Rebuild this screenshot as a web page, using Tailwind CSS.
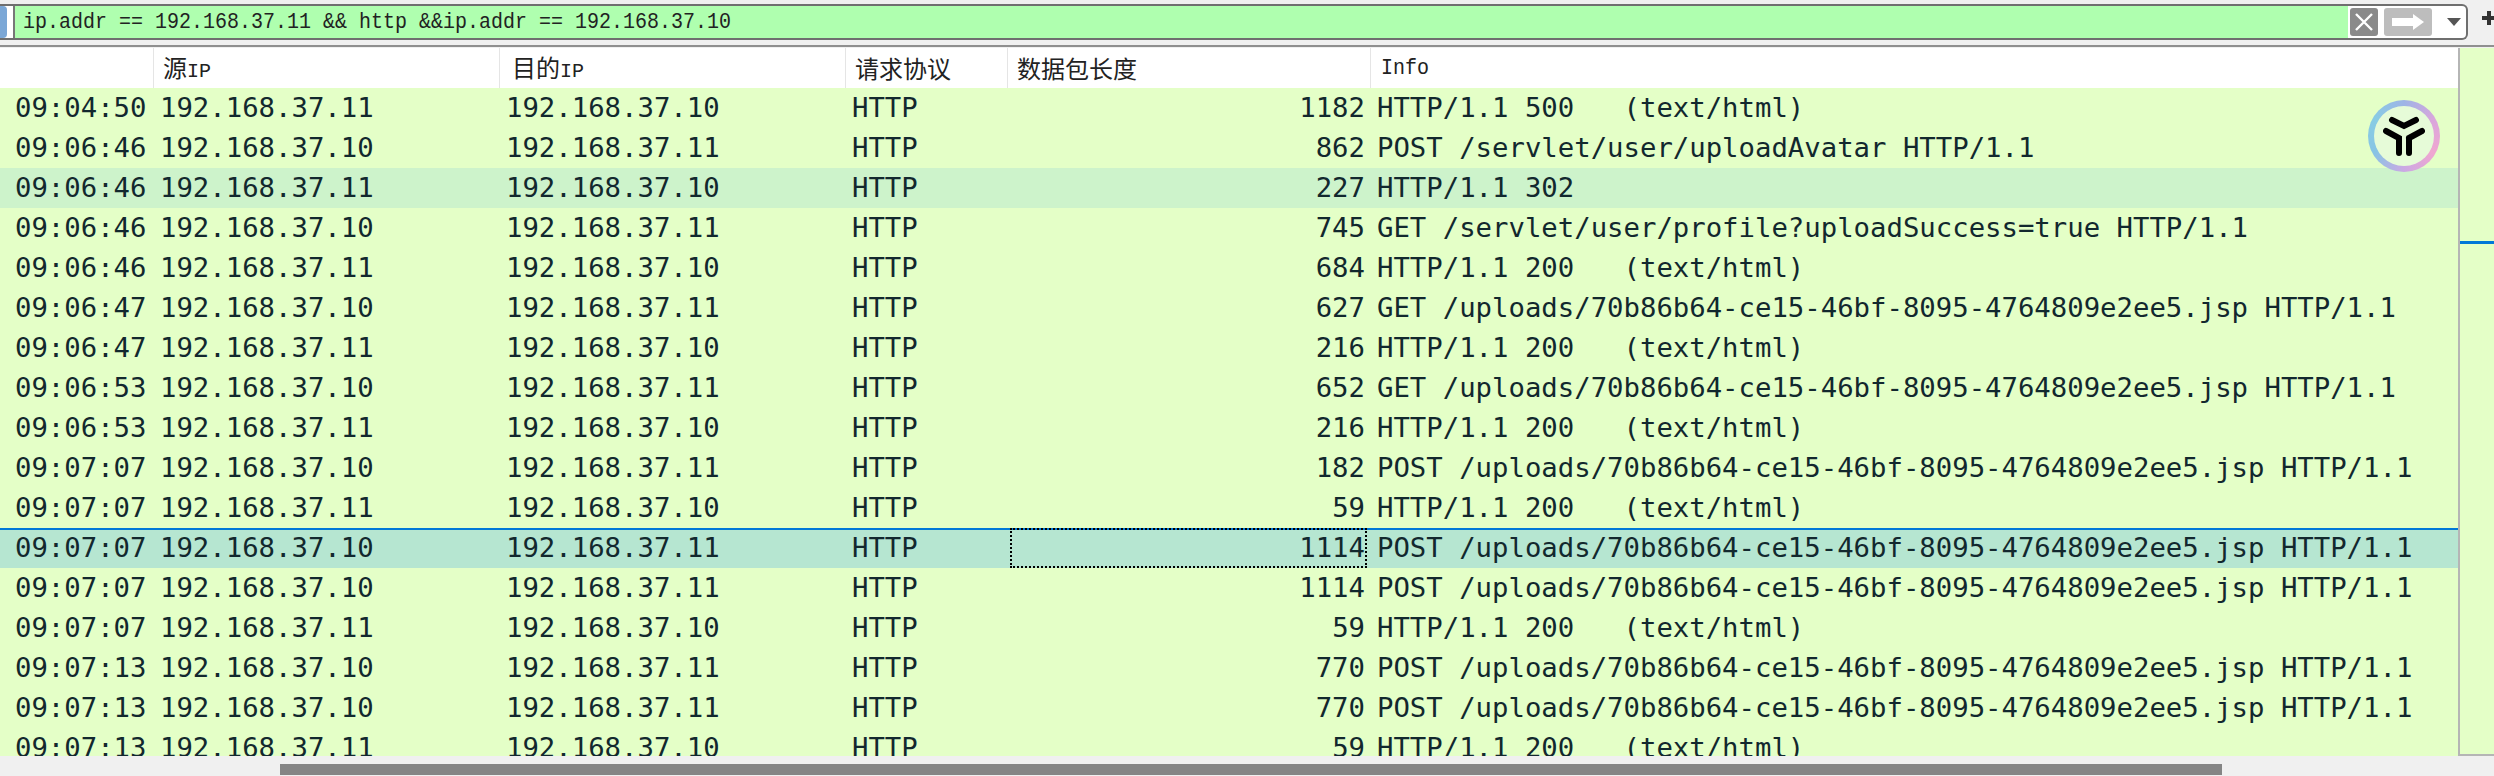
<!DOCTYPE html>
<html lang="en">
<head>
  <meta charset="UTF-8" />
  <title>Packet list</title>
  <script src="https://cdn.jsdelivr.net/npm/@tailwindcss/browser@4"></script>
</head>
<body class="relative h-[776px] w-[2494px] overflow-hidden bg-[#f0f0f0] font-['DejaVu_Sans_Mono',monospace] text-[#12282e]">

  <!-- filter bar -->
  <div class="h-[47px] border-b-2 border-[#8f8f8f] bg-[#f0f0f0] pt-1">
    <div class="relative h-[36px] w-[2468px] border-y-2 border-r-2 border-[#6f6f6f] rounded-r-md bg-white flex">
      <div class="w-[7px] rounded-r-sm bg-[#7ba7d6]"></div>
      <div class="w-[8px] border-r-2 border-[#777] bg-white"></div>
      <div class="flex w-[2333px] items-center bg-[#afffaf] pl-[8px] font-['Liberation_Mono',monospace] text-[20px] text-[#222]">
        <span class="scale-y-[1.12]">ip.addr == 192.168.37.11 &amp;&amp; http &amp;&amp;ip.addr == 192.168.37.10</span>
      </div>
      <div class="flex items-center pl-[2px]">
        <div class="flex h-[28px] w-[28px] items-center justify-center rounded-[3px] bg-[#8a8a8a]">
          <svg width="22" height="22" viewBox="0 0 22 22"><path d="M3 3 19 19M19 3 3 19" stroke="#fff" stroke-width="2.4"/></svg>
        </div>
        <div class="ml-[6px] flex h-[28px] w-[48px] items-center justify-center rounded-[3px] bg-[#bdbdbd]">
          <svg width="34" height="18" viewBox="0 0 34 18"><path d="M1 5h21V1l11 8-11 8v-4H1z" fill="#fff"/></svg>
        </div>
        <svg class="ml-[15px]" width="14" height="8" viewBox="0 0 14 8"><path d="M0 0h14L7 8z" fill="#555"/></svg>
      </div>
    </div>
    <!-- add filter button -->
    <div class="absolute left-[2482px] top-[16px] h-[4px] w-[12px] bg-[#333]"></div>
    <div class="absolute left-[2487px] top-[11px] h-[14px] w-[4px] bg-[#333]"></div>
  </div>

  <div class="flex pt-[1px]">
    <div class="w-[2458px] shrink-0">
      <!-- header -->
      <div class="grid h-[40px] grid-cols-[153px_346px_346px_162px_363px_1fr] items-center bg-white font-['Liberation_Mono','Noto_Sans_CJK_SC',monospace] text-[20px] text-[#222]">
        <div class="h-full"></div>
        <div class="flex h-full items-center border-l border-[#e5e5e5] pl-[9px]"><span><span class="text-[24px] font-['Noto_Sans_CJK_SC',sans-serif]">源</span>IP</span></div>
        <div class="flex h-full items-center border-l border-[#e5e5e5] pl-[12px]"><span><span class="text-[24px] font-['Noto_Sans_CJK_SC',sans-serif]">目的</span>IP</span></div>
        <div class="flex h-full items-center border-l border-[#e5e5e5] pl-[9px]"><span class="text-[24px] font-['Noto_Sans_CJK_SC',sans-serif]">请求协议</span></div>
        <div class="flex h-full items-center border-l border-[#e5e5e5] pl-[9px]"><span class="text-[24px] font-['Noto_Sans_CJK_SC',sans-serif]">数据包长度</span></div>
        <div class="flex h-full items-center border-l border-[#e5e5e5] pl-[10px]"><span class="scale-y-[1.12]">Info</span></div>
      </div>
      <!-- rows -->
      <div id="rows" class="h-[668px] overflow-hidden bg-[#e4ffc7]"></div>
    </div>
    <!-- packet map strip -->
    <div class="relative h-[708px] w-[36px] border-b-2 border-l-2 border-[#b5b5b5] bg-[#e4ffc7]">
      <div class="absolute left-0 top-[193px] h-[3px] w-full bg-[#0078d7]"></div>
    </div>
  </div>

  <!-- floating badge -->
  <div class="absolute left-[2368px] top-[100px] flex h-[72px] w-[72px] items-center justify-center rounded-full bg-[conic-gradient(#9db4e6,#d9a6dc,#f0a6d0,#cba8e4,#88c4e4,#88cce4,#9db4e6)]">
    <div class="flex h-[60px] w-[60px] items-center justify-center rounded-full bg-[#e6fbd8]">
      <svg width="42" height="40" viewBox="0 0 42 40"><g fill="none" stroke="#000" stroke-width="6" stroke-linecap="round"><path d="M9 4l12 6 12-6"/><path d="M3 15l13 7v15"/><path d="M39 15l-13 7"/><path d="M26 23v14"/></g></svg>
    </div>
  </div>

  <!-- horizontal scrollbar -->
  <div class="absolute bottom-[1px] left-[280px] h-[11px] w-[1942px] bg-[#858585]"></div>

  <script>
    var uri = "/uploads/70b86b64-ce15-46bf-8095-4764809e2ee5.jsp HTTP/1.1";
    var a = "192.168.37.11", b = "192.168.37.10";
    var ok = "HTTP/1.1 200   (text/html)";
    var data = [
      ["09:04:50", a, b, "1182", "HTTP/1.1 500   (text/html)"],
      ["09:06:46", b, a, "862", "POST /servlet/user/uploadAvatar HTTP/1.1"],
      ["09:06:46", a, b, "227", "HTTP/1.1 302", "bg-[#cdf3cb]"],
      ["09:06:46", b, a, "745", "GET /servlet/user/profile?uploadSuccess=true HTTP/1.1"],
      ["09:06:46", a, b, "684", ok],
      ["09:06:47", b, a, "627", "GET " + uri],
      ["09:06:47", a, b, "216", ok],
      ["09:06:53", b, a, "652", "GET " + uri],
      ["09:06:53", a, b, "216", ok],
      ["09:07:07", b, a, "182", "POST " + uri],
      ["09:07:07", a, b, "59", ok],
      ["09:07:07", b, a, "1114", "POST " + uri, "sel"],
      ["09:07:07", b, a, "1114", "POST " + uri],
      ["09:07:07", a, b, "59", ok],
      ["09:07:13", b, a, "770", "POST " + uri],
      ["09:07:13", b, a, "770", "POST " + uri],
      ["09:07:13", a, b, "59", ok]
    ];
    document.getElementById("rows").innerHTML = data.map(function (r) {
      var sel = r[5] === "sel";
      var rowCls = sel ? "bg-[#b6e6d1] shadow-[inset_0_2px_0_#0078d7]" : (r[5] || "");
      var lenCls = sel ? "outline-2 outline-dotted -outline-offset-2 outline-black" : "";
      return '<div class="grid h-[40px] grid-cols-[153px_346px_347px_164px_357px_1fr] items-center whitespace-pre text-[27.3px] leading-[40px] ' + rowCls + '">' +
        '<div class="pl-[15px]">' + r[0] + '</div>' +
        '<div class="pl-[7px]">' + r[1] + '</div>' +
        '<div class="pl-[7px]">' + r[2] + '</div>' +
        '<div class="pl-[6px]">HTTP</div>' +
        '<div class="flex h-full items-center justify-end pr-[2px] ' + lenCls + '">' + r[3] + '</div>' +
        '<div class="pl-[10px]">' + r[4] + '</div>' +
      '</div>';
    }).join("");
  </script>
</body>
</html>
